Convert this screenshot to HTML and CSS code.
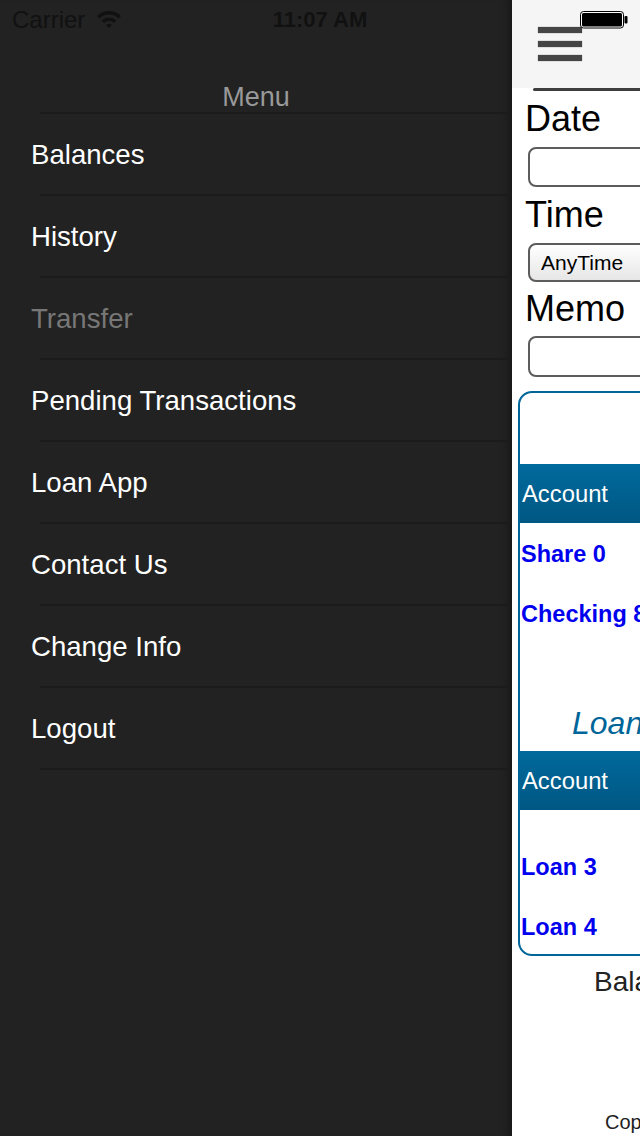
FILE: index.html
```html
<!DOCTYPE html>
<html>
<head>
<meta charset="utf-8">
<title>Menu</title>
<link rel="stylesheet" href="styles.css">
</head>
<body>
<div class="app">
  <nav class="menu">
    <div class="menu-title"><span>Menu</span></div>
    <ul class="menu-list">
      <li><span>Balances</span></li>
      <li><span>History</span></li>
      <li class="disabled"><span>Transfer</span></li>
      <li><span>Pending Transactions</span></li>
      <li><span>Loan App</span></li>
      <li><span>Contact Us</span></li>
      <li><span>Change Info</span></li>
      <li><span>Logout</span></li>
    </ul>
  </nav>
  <main class="main">
    <header class="nav">
      <div class="burger"><span></span><span></span><span></span></div>
    </header>
    <div class="rule"></div>
    <form class="form">
      <label class="label">Date</label>
      <input class="field" type="text">
      <label class="label">Time</label>
      <select class="field select"><option>AnyTime</option></select>
      <label class="label memo">Memo</label>
      <input class="field last" type="text">
    </form>
    <section class="card">
      <div class="caption"></div>
      <div class="thead">Account</div>
      <div class="row">Share 0</div>
      <div class="row">Checking 8</div>
      <div class="caption2">Loans</div>
      <div class="thead">Account</div>
      <div class="spacer"></div>
      <div class="row">Loan 3</div>
      <div class="row end">Loan 4</div>
    </section>
    <p class="asof">Balances as of 11:07 AM</p>
    <p class="copy">Copyright</p>
  </main>
</div>
<div class="statusbar">
  <div class="sb-left">
    <span>Carrier</span>
    <svg class="wifi" width="24" height="17" viewBox="0 0 24 17">
      <path d="M1.22 6.22 A15.25 15.25 0 0 1 22.78 6.22" fill="none" stroke="#111" stroke-width="3.5"/>
      <path d="M5.81 10.81 A8.75 8.75 0 0 1 18.19 10.81" fill="none" stroke="#111" stroke-width="3.5"/>
      <path d="M12 17 L9.17 14.17 A4 4 0 0 1 14.83 14.17 Z" fill="#111"/>
    </svg>
  </div>
  <div class="sb-time">11:07 AM</div>
  <div class="sb-right">
    <svg width="48" height="18" viewBox="0 0 48 18">
      <rect x="0.5" y="0.5" width="43" height="16.5" rx="3" fill="#fff" stroke="#000"/>
      <rect x="2" y="2" width="40" height="13.5" rx="1.5" fill="#000"/>
      <rect x="44.5" y="5" width="3" height="7.5" rx="1" fill="#000"/>
    </svg>
  </div>
</div>
</body>
</html>
```

FILE: styles.css
```css
html, body {
  margin: 0;
  padding: 0;
  width: 640px;
  height: 1136px;
  overflow: hidden;
  background: #fff;
  font-family: "Liberation Sans", Arial, sans-serif;
}

.app {
  display: flex;
  width: max-content;
  height: 1136px;
}

/* ---------- side menu ---------- */
.menu {
  width: 512px;
  flex: none;
  height: 1136px;
  background: #222;
  box-shadow: inset -10px 0 10px -7px rgba(0, 0, 0, 0.35);
}

.menu-title {
  height: 112px;
  display: flex;
  align-items: flex-end;
  justify-content: center;
  color: #999;
  font-size: 27px;
  line-height: 30px;
}

.menu-title span {
  display: block;
}

.menu-list {
  list-style: none;
  margin: 0;
  padding: 2px 0 0;
  background: linear-gradient(#1b1b1b, #1b1b1b) 40px 0 / 472px 2px no-repeat;
}

.menu-list li {
  padding-left: 31px;
  color: #fff;
  font-size: 27.6px;
}

.menu-list li span {
  display: block;
  height: 79px;
  padding-top: 1px;
  line-height: 80px;
}

.menu-list li::after {
  content: "";
  display: block;
  height: 2px;
  margin-left: 9px;
  background: #1b1b1b;
}

.menu-list li.disabled {
  color: #777;
}

/* ---------- main panel ---------- */
.main {
  width: 640px;
  flex: none;
  height: 1136px;
  background: #fff;
}

.nav {
  height: 88px;
  box-sizing: border-box;
  background: #f5f5f5;
  padding: 27px 0 0 26px;
}

.burger span {
  display: block;
  width: 44px;
  height: 6px;
  background: #454545;
  box-shadow: 0 0 1px #777;
  margin-bottom: 8px;
}

.burger span + span + span {
  margin-top: 1px;
}

.rule {
  height: 3px;
  margin-left: 21px;
  background: #3e3e3e;
  border-radius: 3px 0 0 3px;
}

.form {
  display: flex;
  flex-direction: column;
  align-items: flex-start;
  padding-left: 13px;
  margin: 0;
}

.label {
  display: block;
  font-size: 36px;
  line-height: 40px;
  color: #000;
  margin-top: 8px;
}

.label.memo {
  margin-top: 7px;
}

.field {
  display: block;
  box-sizing: border-box;
  width: 220px;
  height: 40px;
  margin: 8px 0 0 3px;
  border: 2px solid #5c5c5c;
  border-radius: 8px;
  background: #fff;
  font-family: "Liberation Sans", Arial, sans-serif;
  padding: 0;
}

.field.last {
  margin-top: 7px;
  height: 41px;
}

.select {
  -webkit-appearance: none;
  appearance: none;
  height: 39px;
  font-size: 21px;
  color: #000;
  padding-left: 11px;
  background: linear-gradient(#ffffff, #e6e6e6);
}

.card {
  margin: 14px 0 0 6px;
  width: 600px;
  border: 2px solid #006699;
  border-radius: 14px;
  overflow: hidden;
}

.caption {
  height: 71px;
}

.thead {
  height: 59px;
  line-height: 59px;
  background: linear-gradient(#006a9c, #005783);
  color: #fff;
  font-size: 23.8px;
  padding-left: 2px;
}

.row {
  height: 60px;
  line-height: 62px;
  color: #0000ee;
  font-weight: bold;
  font-size: 23.5px;
  padding-left: 1px;
}

.row.end {
  height: 58px;
}

.caption2 {
  margin-top: 58px;
  height: 50px;
  line-height: 44px;
  padding-left: 52px;
  color: #006699;
  font-style: italic;
  font-size: 32px;
}

.spacer {
  height: 26px;
}

.asof {
  margin: 10px 0 0;
  padding-left: 82px;
  font-size: 28px;
  line-height: 32px;
  color: #222;
  white-space: nowrap;
}

.copy {
  margin: 112px 0 0;
  padding-left: 93px;
  font-size: 20px;
  line-height: 24px;
  color: #222;
  white-space: nowrap;
}

/* ---------- status bar overlay ---------- */
.statusbar {
  position: absolute;
  top: 0;
  left: 0;
  width: 640px;
  height: 40px;
  display: grid;
  grid-template-columns: 1fr auto 1fr;
  align-items: center;
  color: #111;
}

.sb-left {
  display: flex;
  align-items: center;
  gap: 12px;
  padding-left: 12px;
  font-size: 24px;
}

.wifi {
  margin-top: -2px;
}

.sb-time {
  font-size: 22px;
  font-weight: bold;
}

.sb-right {
  justify-self: end;
  padding-right: 12px;
  display: flex;
  align-items: center;
}
```
